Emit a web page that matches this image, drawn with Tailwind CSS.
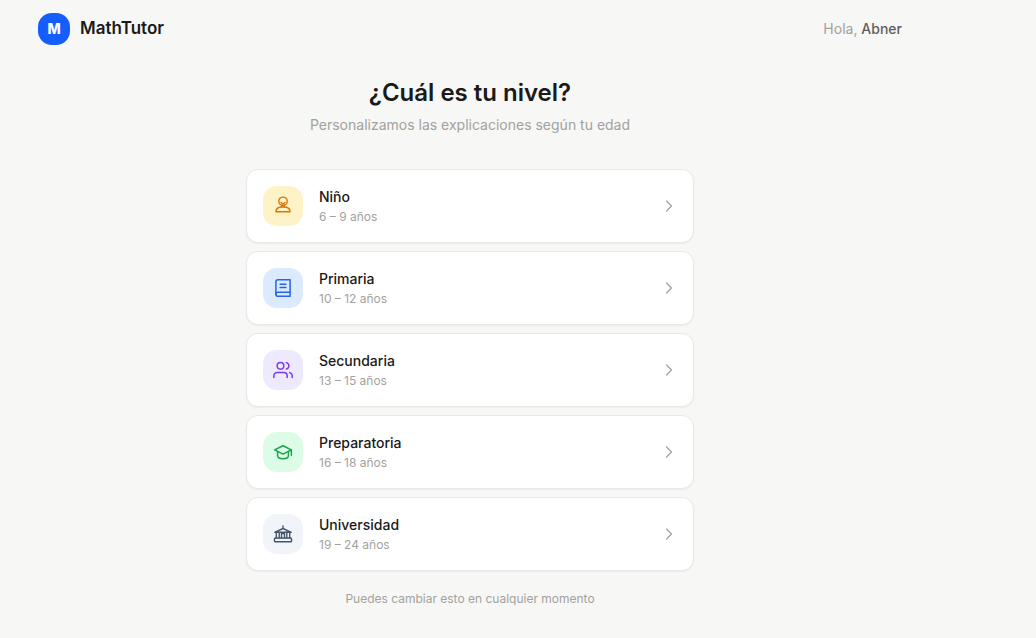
<!DOCTYPE html>
<html lang="es">
<head>
  <meta charset="UTF-8" />
  <meta name="viewport" content="width=device-width, initial-scale=1.0"/>
  <title>Elige tu nivel | MathTutor</title>
  <script src="https://cdn.jsdelivr.net/npm/@tailwindcss/browser@4"></script>
</head>
<body class="min-h-screen bg-[#f7f7f5] font-['Inter',sans-serif] text-[#1a1a1a]">
  <div class="max-w-[940px]">

    <!-- Header -->
    <header class="flex items-center justify-between px-[38px] py-[13px]">
      <a href="#" class="flex items-center gap-[10px]">
        <span class="flex h-8 w-8 items-center justify-center rounded-[14px] bg-[#155dfc] text-sm font-extrabold text-white">M</span>
        <span class="text-[17px] font-semibold">MathTutor</span>
      </a>
      <p class="text-sm text-[#a3a29e]">Hola, <span class="font-medium text-[#5f5e5b]">Abner</span></p>
    </header>

    <!-- Level picker -->
    <main class="mx-auto max-w-md pt-[19px] pb-6">
      <h1 class="text-center text-2xl font-semibold">¿Cuál es tu nivel?</h1>
      <p class="mt-1 text-center text-sm leading-6 text-[#a3a29e]">Personalizamos las explicaciones según tu edad</p>

      <div class="mt-8 flex flex-col gap-2">
        <!-- Niño -->
        <button type="button" class="flex w-full items-center gap-4 rounded-xl border border-[#e8e8e6] bg-white p-4 text-left shadow-xs hover:border-gray-300">
          <span class="flex h-10 w-10 shrink-0 items-center justify-center rounded-[14px] bg-[#fef3c6] text-[#d97706]">
            <svg class="h-5 w-5" viewBox="0 0 20 20" fill="none" stroke="currentColor" stroke-width="1.4" stroke-linecap="round" stroke-linejoin="round" aria-hidden="true">
              <circle cx="10" cy="5.3" r="4.200"/>
              <path d="M8 6.500l2 1.600 2-1.600M8.500 9.300v1.700M11.500 9.300v1.700"/>
              <path d="M2.900 15.700c0-2.800 2.600-4.500 5.600-4.700h3c3 .2 5.600 1.900 5.600 4.700z"/>
            </svg>
          </span>
          <span class="flex-1">
            <span class="block text-sm leading-[22px] font-medium">Niño</span>
            <span class="block text-xs leading-[18px] text-[#a3a29e]">6 – 9 años</span>
          </span>
          <svg class="h-4 w-4 shrink-0 text-[#a3a29e]" viewBox="0 0 16 16" fill="none" stroke="currentColor" stroke-width="1.3" stroke-linecap="round" stroke-linejoin="round" aria-hidden="true"><path d="M5.500 3l5 5-5 5"/></svg>
        </button>

        <!-- Primaria -->
        <button type="button" class="flex w-full items-center gap-4 rounded-xl border border-[#e8e8e6] bg-white p-4 text-left shadow-xs hover:border-gray-300">
          <span class="flex h-10 w-10 shrink-0 items-center justify-center rounded-[14px] bg-[#dbeafe] text-[#2563eb]">
            <svg class="h-5 w-5" viewBox="0 0 24 24" fill="none" stroke="currentColor" stroke-width="1.800" stroke-linecap="round" stroke-linejoin="round" aria-hidden="true">
              <path d="M3.500 19.500A2.500 2.500 0 0 1 6 17h14.500"/>
              <path d="M6 2h14.500v20H6a2.500 2.500 0 0 1-2.500-2.500v-15A2.500 2.500 0 0 1 6 2z"/>
              <path d="M8.500 7.500h7M8.500 11.500h7"/>
            </svg>
          </span>
          <span class="flex-1">
            <span class="block text-sm leading-[22px] font-medium">Primaria</span>
            <span class="block text-xs leading-[18px] text-[#a3a29e]">10 – 12 años</span>
          </span>
          <svg class="h-4 w-4 shrink-0 text-[#a3a29e]" viewBox="0 0 16 16" fill="none" stroke="currentColor" stroke-width="1.3" stroke-linecap="round" stroke-linejoin="round" aria-hidden="true"><path d="M5.500 3l5 5-5 5"/></svg>
        </button>

        <!-- Secundaria -->
        <button type="button" class="flex w-full items-center gap-4 rounded-xl border border-[#e8e8e6] bg-white p-4 text-left shadow-xs hover:border-gray-300">
          <span class="flex h-10 w-10 shrink-0 items-center justify-center rounded-[14px] bg-[#ede9fe] text-[#7c3aed]">
            <svg class="h-5 w-5" viewBox="0 0 24 24" fill="none" stroke="currentColor" stroke-width="1.800" stroke-linecap="round" stroke-linejoin="round" aria-hidden="true">
              <path d="M17 21v-2a4 4 0 0 0-4-4H5a4 4 0 0 0-4 4v2"/>
              <circle cx="9" cy="7" r="4"/>
              <path d="M23 21v-2a4 4 0 0 0-3-3.870M16 3.130a4 4 0 0 1 0 7.750"/>
            </svg>
          </span>
          <span class="flex-1">
            <span class="block text-sm leading-[22px] font-medium">Secundaria</span>
            <span class="block text-xs leading-[18px] text-[#a3a29e]">13 – 15 años</span>
          </span>
          <svg class="h-4 w-4 shrink-0 text-[#a3a29e]" viewBox="0 0 16 16" fill="none" stroke="currentColor" stroke-width="1.3" stroke-linecap="round" stroke-linejoin="round" aria-hidden="true"><path d="M5.500 3l5 5-5 5"/></svg>
        </button>

        <!-- Preparatoria -->
        <button type="button" class="flex w-full items-center gap-4 rounded-xl border border-[#e8e8e6] bg-white p-4 text-left shadow-xs hover:border-gray-300">
          <span class="flex h-10 w-10 shrink-0 items-center justify-center rounded-[14px] bg-[#dcfce7] text-[#16a34a]">
            <svg class="h-5 w-5" viewBox="0 0 24 24" fill="none" stroke="currentColor" stroke-width="1.800" stroke-linecap="round" stroke-linejoin="round" aria-hidden="true">
              <path d="M12 4.500L2 9.500l10 5 10-5z"/>
              <path d="M5.500 11.500v5c0 1.500 2 3.500 6.500 3.500s6.500-2 6.500-3.500v-5M22 9.500v6.500"/>
            </svg>
          </span>
          <span class="flex-1">
            <span class="block text-sm leading-[22px] font-medium">Preparatoria</span>
            <span class="block text-xs leading-[18px] text-[#a3a29e]">16 – 18 años</span>
          </span>
          <svg class="h-4 w-4 shrink-0 text-[#a3a29e]" viewBox="0 0 16 16" fill="none" stroke="currentColor" stroke-width="1.3" stroke-linecap="round" stroke-linejoin="round" aria-hidden="true"><path d="M5.500 3l5 5-5 5"/></svg>
        </button>

        <!-- Universidad -->
        <button type="button" class="flex w-full items-center gap-4 rounded-xl border border-[#e8e8e6] bg-white p-4 text-left shadow-xs hover:border-gray-300">
          <span class="flex h-10 w-10 shrink-0 items-center justify-center rounded-[14px] bg-[#f1f5f9] text-[#475569]">
            <svg class="h-5 w-5" viewBox="0 0 20 20" fill="none" stroke="currentColor" stroke-width="1.400" stroke-linecap="round" stroke-linejoin="round" aria-hidden="true">
              <path d="M10 2v2.500M1.700 8.300L10 4.500l8.300 3.800z"/>
              <path d="M3.300 8.500v5.500M6.200 14V8.500M8.500 14V9.500h3V14M13.800 14V8.500M16.700 14V8.500"/>
              <rect x="1.500" y="14" width="17" height="3.700" rx=".8"/>
            </svg>
          </span>
          <span class="flex-1">
            <span class="block text-sm leading-[22px] font-medium">Universidad</span>
            <span class="block text-xs leading-[18px] text-[#a3a29e]">19 – 24 años</span>
          </span>
          <svg class="h-4 w-4 shrink-0 text-[#a3a29e]" viewBox="0 0 16 16" fill="none" stroke="currentColor" stroke-width="1.3" stroke-linecap="round" stroke-linejoin="round" aria-hidden="true"><path d="M5.500 3l5 5-5 5"/></svg>
        </button>
      </div>

      <p class="mt-5 text-center text-xs text-[#a3a29e]">Puedes cambiar esto en cualquier momento</p>
    </main>

  </div>
</body>
</html>
